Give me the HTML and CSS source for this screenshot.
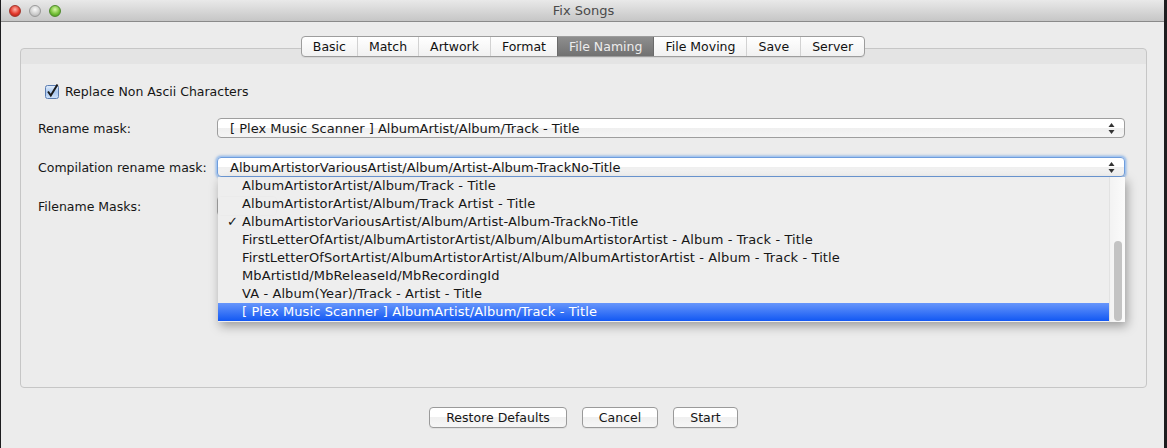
FILE: index.html
```html
<!DOCTYPE html>
<html lang="en">
  <head>
    <meta charset="UTF-8" />
    <title>Fix Songs</title>
    <link rel="stylesheet" href="styles.css">
  </head>
  <body>
    <div class="window">
      <header class="titlebar">
        <div class="lights">
          <span class="light red"></span>
          <span class="light gray"></span>
          <span class="light green"></span>
        </div>
        <div class="title">Fix Songs</div>
      </header>

      <section class="panel">
        <nav class="tabs">
          <span class="tab">Basic</span>
          <span class="tab">Match</span>
          <span class="tab">Artwork</span>
          <span class="tab">Format</span>
          <span class="tab active">File Naming</span>
          <span class="tab">File Moving</span>
          <span class="tab">Save</span>
          <span class="tab">Server</span>
        </nav>

        <div class="panel-body">
          <label class="check-row">
            <svg class="checkbox" width="14" height="15" viewBox="0 0 14 15">
              <defs>
                <linearGradient id="cb" x1="0" y1="0" x2="0" y2="1">
                  <stop offset="0" stop-color="#e6f0fc" />
                  <stop offset="0.5" stop-color="#a9c7ef" />
                  <stop offset="1" stop-color="#cfe2fa" />
                </linearGradient>
              </defs>
              <rect x="0.5" y="1.5" width="13" height="13" rx="2" fill="url(#cb)" stroke="#5a7cb1" />
              <path d="M3 7.5 L5.8 11.5 L12.5 0.5" fill="none" stroke="#1b1b1b" stroke-width="2" />
            </svg>
            Replace Non Ascii Characters
          </label>

          <div class="form-row">
            <span class="label">Rename mask:</span>
            <div class="select">
              <span>[ Plex Music Scanner ] AlbumArtist/Album/Track - Title</span>
              <svg class="arrows" width="7" height="13" viewBox="0 0 7 13"><path d="M3.5 1 L6.5 5 L0.5 5 Z M0.5 8 L6.5 8 L3.5 12 Z" fill="#333" /></svg>
            </div>
          </div>

          <div class="form-row">
            <span class="label">Compilation rename mask:</span>
            <div class="select focused">
              <span>AlbumArtistorVariousArtist/Album/Artist-Album-TrackNo-Title</span>
              <svg class="arrows" width="7" height="13" viewBox="0 0 7 13"><path d="M3.5 1 L6.5 5 L0.5 5 Z M0.5 8 L6.5 8 L3.5 12 Z" fill="#333" /></svg>

              <div class="menu">
                <ul class="menu-list">
                  <li>AlbumArtistorArtist/Album/Track - Title</li>
                  <li>AlbumArtistorArtist/Album/Track Artist - Title</li>
                  <li class="checked">AlbumArtistorVariousArtist/Album/Artist-Album-TrackNo-Title</li>
                  <li>FirstLetterOfArtist/AlbumArtistorArtist/Album/AlbumArtistorArtist - Album - Track - Title</li>
                  <li>FirstLetterOfSortArtist/AlbumArtistorArtist/Album/AlbumArtistorArtist - Album - Track - Title</li>
                  <li>MbArtistId/MbReleaseId/MbRecordingId</li>
                  <li>VA - Album(Year)/Track - Artist - Title</li>
                  <li class="selected">[ Plex Music Scanner ] AlbumArtist/Album/Track - Title</li>
                </ul>
                <div class="scrollbar"><div class="thumb"></div></div>
              </div>
            </div>
          </div>

          <div class="form-row">
            <span class="label">Filename Masks:</span>
            <div class="masks">
              <span class="mask-btn"></span>
            </div>
          </div>
        </div>
      </section>

      <footer class="actions">
        <button class="btn">Restore Defaults</button>
        <button class="btn">Cancel</button>
        <button class="btn">Start</button>
      </footer>
    </div>
  </body>
</html>
```

FILE: styles.css
```css
html,
body {
  margin: 0;
  height: 100%;
}
body {
  background-color: #1d1d1f;
  font-family: "DejaVu Sans", sans-serif;
  font-size: 12.5px;
  color: #161616;
  overflow: hidden;
}
.window {
  display: flex;
  flex-direction: column;
  width: 1163px;
  height: 448px;
  margin-left: 1px;
  background-color: #ececec;
}

/* title bar */
.titlebar {
  position: relative;
  height: 21px;
  border-bottom: 1px solid #8a8a8a;
  background: linear-gradient(#e9e9e9, #c6c6c6);
  display: flex;
  align-items: center;
  justify-content: center;
}
.lights {
  position: absolute;
  left: 8px;
  top: 5px;
  display: flex;
  gap: 8px;
}
.light {
  width: 12px;
  height: 12px;
  border-radius: 50%;
  box-sizing: border-box;
}
.light.red {
  background: radial-gradient(circle at 50% 35%, #ffb3a8, #e3392c 55%, #a11d12);
  border: 1px solid #a4352b;
}
.light.gray {
  background: radial-gradient(circle at 50% 35%, #fafafa, #d0d0d0 55%, #a8a8a8);
  border: 1px solid #9a9a9a;
}
.light.green {
  background: radial-gradient(circle at 50% 35%, #d9f7a6, #76c13a 55%, #3e8a16);
  border: 1px solid #4f8a2c;
}
.title {
  font-size: 13px;
  color: #4a4a4a;
  padding-left: 2px;
}

/* tabbed panel */
.panel {
  flex: 1;
  margin: 26px 17px 0 19px;
  border: 1px solid #c6c6c6;
  border-radius: 4px;
  background: linear-gradient(#e4e4e4 0, #e4e4e4 15px, #ececec 15px);
  display: flex;
  flex-direction: column;
}
.tabs {
  display: flex;
  align-self: center;
  height: 19px;
  margin-top: -13px;
  margin-left: -1px;
  border: 1px solid #9d9d9d;
  border-radius: 4px;
  background: linear-gradient(#ffffff, #f1f1f1);
  overflow: hidden;
  box-shadow: 0 1px 0 rgba(0, 0, 0, 0.06);
}
.tab {
  display: flex;
  align-items: center;
  padding: 0 11px;
  line-height: 19px;
  border-left: 1px solid #d2d2d2;
  color: #111;
}
.tab:first-child {
  border-left: none;
}
.tab.active {
  background: linear-gradient(#8e8e8e, #717171);
  color: #ededed;
  border-left-color: #6a6a6a;
}
.tab.active + .tab {
  border-left-color: #6a6a6a;
}

.panel-body {
  display: flex;
  flex-direction: column;
  gap: 19px;
  padding: 27px 21px 0 17px;
}
.check-row {
  display: flex;
  align-items: center;
  gap: 6px;
  height: 15px;
  margin-left: 7px;
}
.form-row {
  display: flex;
  align-items: center;
  height: 20px;
}
.label {
  width: 179px;
  flex-shrink: 0;
}
.select {
  position: relative;
  flex: 1;
  height: 18px;
  display: flex;
  align-items: center;
  padding: 0 9px 0 12px;
  border: 1px solid #9e9e9e;
  border-radius: 4px;
  background: linear-gradient(#ffffff 0, #ffffff 50%, #efefef 50%, #f5f5f5);
  font-size: 13px;
}
.select span {
  flex: 1;
}
.select.focused {
  border-color: #6f9ddc;
  box-shadow: 0 0 0 1px #a6c6ef, 0 0 2px 2px rgba(120, 166, 226, 0.5);
}
.arrows {
  display: block;
}

/* open popup list */
.menu {
  position: absolute;
  top: 19px;
  left: 0;
  right: -1px;
  height: 145px;
  display: flex;
  background-color: rgba(237, 237, 237, 0.97);
  box-shadow: 2px 4px 10px rgba(0, 0, 0, 0.35);
  z-index: 2;
}
.menu-list {
  flex: 1;
  list-style: none;
  margin: 0;
  padding: 0;
  letter-spacing: 0.1px;
}
.menu-list li {
  height: 18px;
  line-height: 18px;
  padding-left: 24px;
  white-space: nowrap;
  position: relative;
}
.menu-list li.checked::before {
  content: "\2713";
  position: absolute;
  left: 9px;
}
.menu-list li.selected {
  background: linear-gradient(#6796fb, #1258f3);
  color: #ffffff;
}
.scrollbar {
  width: 15px;
  background: linear-gradient(90deg, #f3f3f3, #fbfbfb);
  border-left: 1px solid #e2e2e2;
  display: flex;
  flex-direction: column;
  justify-content: flex-end;
  align-items: center;
  padding-bottom: 1px;
}
.thumb {
  width: 8px;
  height: 80px;
  border-radius: 4px;
  background-color: #c3c3c3;
}

.masks {
  flex: 1;
  display: flex;
}
.mask-btn {
  width: 60px;
  height: 20px;
  box-sizing: border-box;
  border: 1px solid #a8a8a8;
  border-radius: 4px;
  background: linear-gradient(#ffffff, #f1f1f1);
}

/* bottom buttons */
.actions {
  height: 60px;
  display: flex;
  justify-content: center;
  align-items: flex-start;
  gap: 15px;
  padding-left: 2px;
}
.btn {
  margin-top: 19px;
  height: 21px;
  padding: 0 16px;
  font-family: "DejaVu Sans", sans-serif;
  font-size: 12.5px;
  color: #161616;
  border: 1px solid #9a9a9a;
  border-radius: 4px;
  background: linear-gradient(#ffffff 0, #ffffff 50%, #f0f0f0 50%, #f6f6f6);
  box-shadow: 0 1px 0 rgba(0, 0, 0, 0.05);
}
```
